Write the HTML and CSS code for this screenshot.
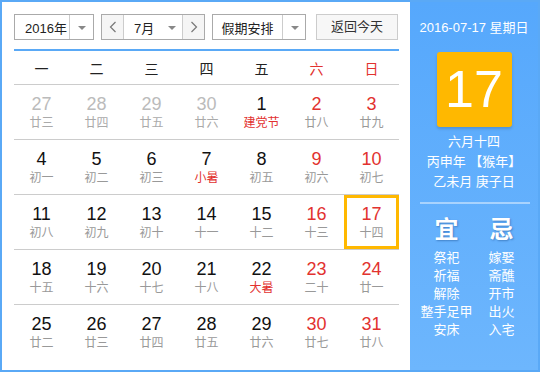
FILE: index.html
```html
<!DOCTYPE html>
<html lang="zh-CN">
  <head>
    <meta charset="UTF-8" />
    <title>万年历</title>
    <link rel="stylesheet" href="styles.css">
  </head>
  <body>
    <div class="calendar">
      <div class="main">
        <div class="toolbar">
          <div class="select year">
            <span class="label">2016年</span>
            <span class="arrow"></span>
          </div>
          <div class="month-group">
            <span class="nav">
              <svg width="8" height="12" viewBox="0 0 8 12"><path d="M6.5 1 L1.5 6 L6.5 11" fill="none" stroke="#777" stroke-width="1.2"/></svg>
            </span>
            <div class="select month">
              <span class="label">7月</span>
              <span class="arrow"></span>
            </div>
            <span class="nav">
              <svg width="8" height="12" viewBox="0 0 8 12"><path d="M1.5 1 L6.5 6 L1.5 11" fill="none" stroke="#777" stroke-width="1.2"/></svg>
            </span>
          </div>
          <div class="select holiday">
            <span class="label">假期安排</span>
            <span class="arrow"></span>
          </div>
          <a href="#" class="today-btn">返回今天</a>
        </div>

        <div class="weekdays">
          <span>一</span><span>二</span><span>三</span><span>四</span><span>五</span>
          <span class="red">六</span><span class="red">日</span>
        </div>

        <div class="week">
          <div class="day other"><b>27</b><i>廿三</i></div>
          <div class="day other"><b>28</b><i>廿四</i></div>
          <div class="day other"><b>29</b><i>廿五</i></div>
          <div class="day other"><b>30</b><i>廿六</i></div>
          <div class="day"><b>1</b><i class="fest">建党节</i></div>
          <div class="day weekend"><b>2</b><i>廿八</i></div>
          <div class="day weekend"><b>3</b><i>廿九</i></div>
        </div>
        <div class="week">
          <div class="day"><b>4</b><i>初一</i></div>
          <div class="day"><b>5</b><i>初二</i></div>
          <div class="day"><b>6</b><i>初三</i></div>
          <div class="day"><b>7</b><i class="fest">小暑</i></div>
          <div class="day"><b>8</b><i>初五</i></div>
          <div class="day weekend"><b>9</b><i>初六</i></div>
          <div class="day weekend"><b>10</b><i>初七</i></div>
        </div>
        <div class="week">
          <div class="day"><b>11</b><i>初八</i></div>
          <div class="day"><b>12</b><i>初九</i></div>
          <div class="day"><b>13</b><i>初十</i></div>
          <div class="day"><b>14</b><i>十一</i></div>
          <div class="day"><b>15</b><i>十二</i></div>
          <div class="day weekend"><b>16</b><i>十三</i></div>
          <div class="day weekend today"><b>17</b><i>十四</i></div>
        </div>
        <div class="week">
          <div class="day"><b>18</b><i>十五</i></div>
          <div class="day"><b>19</b><i>十六</i></div>
          <div class="day"><b>20</b><i>十七</i></div>
          <div class="day"><b>21</b><i>十八</i></div>
          <div class="day"><b>22</b><i class="fest">大暑</i></div>
          <div class="day weekend"><b>23</b><i>二十</i></div>
          <div class="day weekend"><b>24</b><i>廿一</i></div>
        </div>
        <div class="week last">
          <div class="day"><b>25</b><i>廿二</i></div>
          <div class="day"><b>26</b><i>廿三</i></div>
          <div class="day"><b>27</b><i>廿四</i></div>
          <div class="day"><b>28</b><i>廿五</i></div>
          <div class="day"><b>29</b><i>廿六</i></div>
          <div class="day weekend"><b>30</b><i>廿七</i></div>
          <div class="day weekend"><b>31</b><i>廿八</i></div>
        </div>
      </div>

      <div class="panel">
        <div class="panel-date">2016-07-17 星期日</div>
        <div class="big-day">17</div>
        <div class="lunar">
          <p>六月十四</p>
          <p>丙申年 【猴年】</p>
          <p>乙未月 庚子日</p>
        </div>
        <div class="divider"></div>
        <div class="advice">
          <div class="col">
            <h3>宜</h3>
            <p>祭祀</p>
            <p>祈福</p>
            <p>解除</p>
            <p>整手足甲</p>
            <p>安床</p>
          </div>
          <div class="col">
            <h3>忌</h3>
            <p>嫁娶</p>
            <p>斋醮</p>
            <p>开市</p>
            <p>出火</p>
            <p>入宅</p>
          </div>
        </div>
      </div>
    </div>
  </body>
</html>
```

FILE: styles.css
```css
/* Global */
body {
  margin: 0;
  padding: 0;
  font-family: "Liberation Sans", Arial, "Noto Sans CJK SC", sans-serif;
  color: #333;
  background: #fff;
}

.calendar {
  width: 540px;
  height: 372px;
  box-sizing: border-box;
  border: 2px solid #5aa9f6;
  display: flex;
}

/* Left part */
.main {
  width: 408px;
  box-sizing: border-box;
  padding: 12px 11px 0 12px;
}

.toolbar {
  display: flex;
  height: 26px;
  margin-bottom: 9px;
}

.select {
  display: flex;
  align-items: center;
  height: 26px;
  box-sizing: border-box;
  border: 1px solid #aaa;
  font-size: 13px;
  color: #222;
  background: #fff;
  white-space: nowrap;
}

.select .label {
  flex: none;
}

.select .arrow {
  position: relative;
  height: 100%;
  flex: none;
}

.select .arrow::after {
  content: "";
  position: absolute;
  left: 50%;
  top: 11px;
  margin-left: -4px;
  border-left: 4px solid transparent;
  border-right: 4px solid transparent;
  border-top: 4px solid #888;
}

.year {
  width: 80px;
}
.year .label {
  width: 54px;
  padding-left: 10px;
  box-sizing: border-box;
}
.year .arrow {
  width: 24px;
  border-left: 1px solid #ccc;
}

.month-group {
  display: flex;
  margin-left: 7px;
  height: 26px;
  box-sizing: border-box;
  border: 1px solid #aaa;
}
.month-group .nav {
  width: 21px;
  display: flex;
  align-items: center;
  justify-content: center;
  background: #f5f5f5;
}
.month-group .month {
  width: 60px;
  height: 24px;
  border: none;
  border-left: 1px solid #ccc;
  border-right: 1px solid #ccc;
}
.month .label {
  width: 38px;
  padding-left: 10px;
  box-sizing: border-box;
}
.month .arrow {
  width: 20px;
}

.holiday {
  width: 94px;
  margin-left: 7px;
}
.holiday .label {
  width: 69px;
  text-align: center;
}
.holiday .arrow {
  width: 23px;
  border-left: 1px solid #ccc;
}

.today-btn {
  margin-left: 10px;
  width: 82px;
  height: 26px;
  box-sizing: border-box;
  border: 1px solid #ccc;
  background: #f7f7f7;
  color: #333;
  font-size: 13px;
  line-height: 24px;
  text-align: center;
  text-decoration: none;
}

/* Weekday header */
.weekdays {
  display: grid;
  grid-template-columns: repeat(7, 55px);
  border-top: 2px solid #5aa9f6;
  border-bottom: 1px solid #ccc;
  height: 33px;
  align-items: center;
  font-size: 14px;
  color: #222;
}
.weekdays span {
  text-align: center;
}
.weekdays .red {
  color: #e2322f;
}

/* Day grid */
.week {
  display: grid;
  grid-template-columns: repeat(7, 55px);
  border-bottom: 1px solid #ccc;
}
.week.last {
  border-bottom: none;
}

.day {
  height: 54px;
  box-sizing: border-box;
  padding-top: 9px;
  text-align: center;
  cursor: pointer;
}
.day b {
  display: block;
  font-weight: normal;
  font-size: 18px;
  line-height: 20px;
  color: #111;
}
.day i {
  display: block;
  font-style: normal;
  font-size: 12px;
  line-height: 18px;
  color: #999;
}
.day i.fest {
  color: #e2322f;
}
.day.weekend b {
  color: #e2322f;
}
.day.other b {
  color: #bbb;
}
.day.other i {
  color: #aaa;
}
.day.today {
  border: 3px solid #ffb800;
  padding-top: 6px;
}

/* Right panel */
.panel {
  width: 128px;
  background: linear-gradient(#56a8fc, #6db6fd);
  color: #fff;
  text-align: center;
}

.panel-date {
  margin-top: 16px;
  font-size: 13px;
  line-height: 20px;
}

.big-day {
  width: 75px;
  height: 75px;
  margin: 14px auto 0;
  background: #ffb800;
  border-radius: 3px;
  box-shadow: 0 2px 3px rgba(0, 0, 0, 0.15);
  font-size: 52px;
  line-height: 75px;
}

.lunar {
  margin-top: 5px;
}
.lunar p {
  margin: 0;
  font-size: 13px;
  line-height: 20px;
}

.divider {
  height: 2px;
  margin: 10px 8px 0 10px;
  background: rgba(255, 255, 255, 0.45);
}

.advice {
  display: flex;
  justify-content: center;
  margin-top: 11px;
}
.advice .col {
  width: 55px;
}
.advice h3 {
  margin: 0 0 4px;
  font-size: 24px;
  line-height: 30px;
  font-weight: bold;
  text-shadow: 1px 1px 2px rgba(0, 40, 100, 0.35);
}
.advice p {
  margin: 0;
  font-size: 13px;
  line-height: 18px;
}
```
